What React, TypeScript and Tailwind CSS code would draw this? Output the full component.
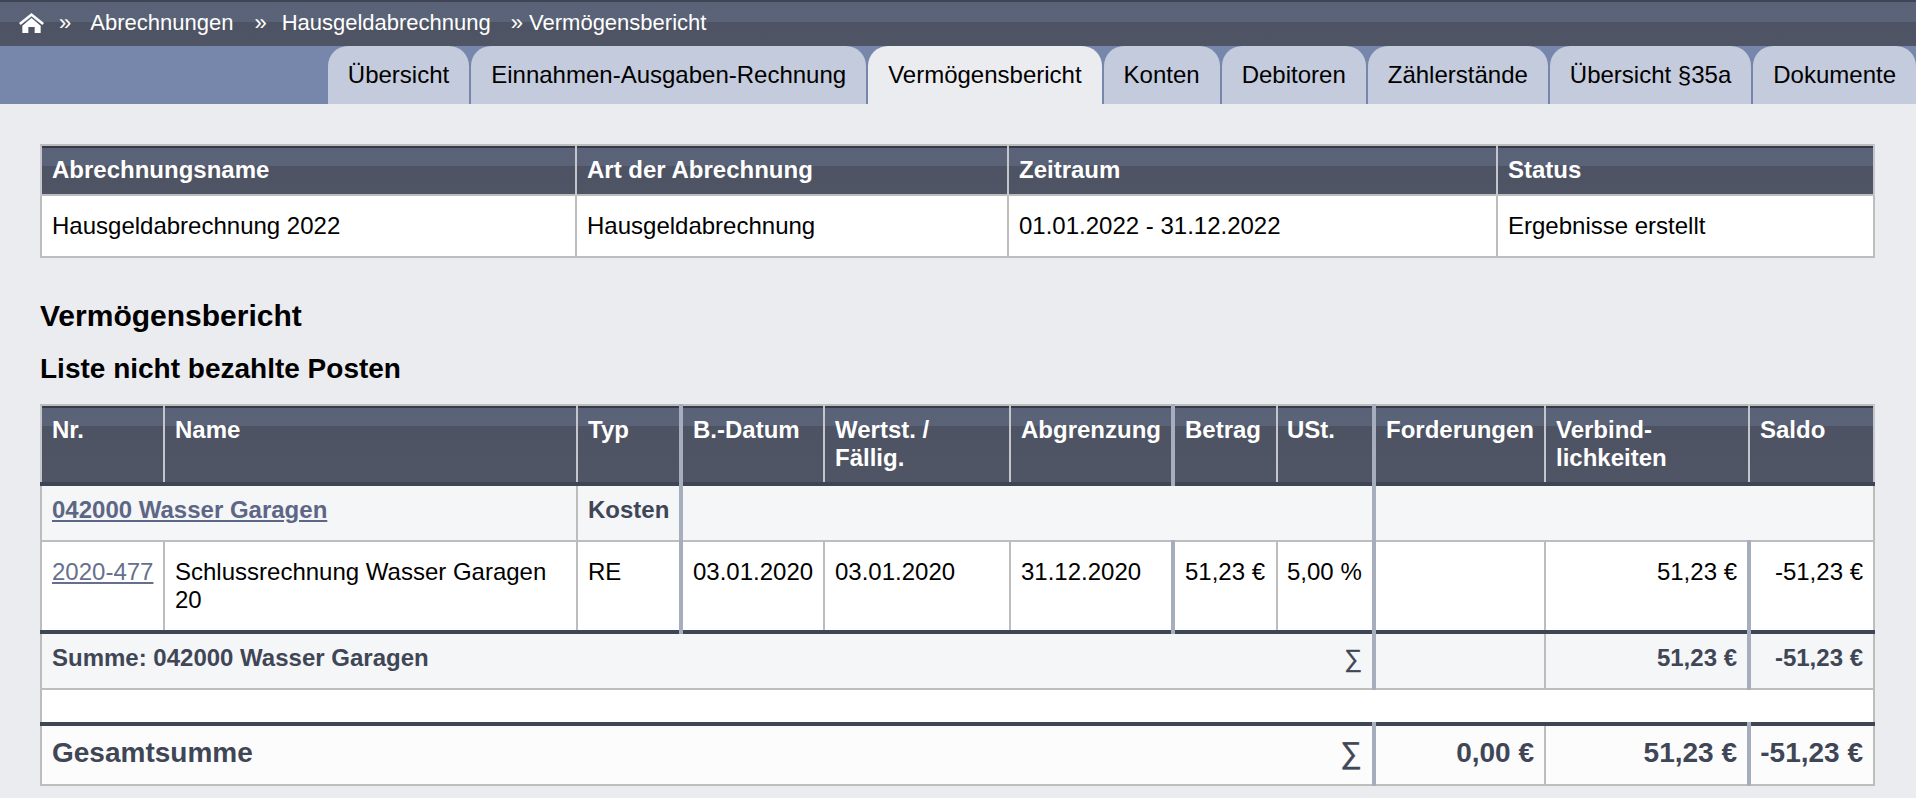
const crumbs = ["Abrechnungen", "Hausgeldabrechnung"];

const tabs = [
  "Übersicht",
  "Einnahmen-Ausgaben-Rechnung",
  "Vermögensbericht",
  "Konten",
  "Debitoren",
  "Zählerstände",
  "Übersicht §35a",
  "Dokumente",
];

const headBg =
  "bg-[linear-gradient(#353a47_0,#353a47_2px,#596276_2px,#5a6377_20px,#4d5362_20px,#4f5565_100%)]";
const th = `${headBg} border-x-2 border-t-2 border-[#c4c6cb] border-t-[#bdbdbd] px-2.5 py-2.5 text-left align-top font-bold text-white`;
const thick = "border-l-4 border-l-[#a6aebd]";
const rowBorder = "border-2 border-[#bdbdbd]";
const amount = "whitespace-nowrap px-2.5 text-right";

function HomeIcon() {
  return (
    <svg viewBox="0 0 75 60" className="h-5 w-[25px] fill-white">
      <path d="M37.5 0 75 30l-5 6-32.5-26L5 36l-5-6Z" />
      <path d="M10 38 37.5 15 65 38v22H47V42H28v18H10Z" />
    </svg>
  );
}

export default function App() {
  return (
    <div className="min-h-screen bg-[#ebecf0] font-['Liberation_Sans',Arial,sans-serif] text-[24px] leading-7 text-black">
      <header className="flex h-[46px] items-center bg-[linear-gradient(#3f4555_0,#3f4555_2px,#596276_2px,#5a6377_22px,#4d5362_22px,#4f5565_100%)] pl-[19px] text-[22px] text-white">
        <a href="#" className="mr-[15px]">
          <HomeIcon />
        </a>
        <span className="mr-[19px]">»</span>
        <a href="#">{crumbs[0]}</a>
        <span className="ml-[21px] mr-[15px]">»</span>
        <a href="#">{crumbs[1]}</a>
        <span className="ml-5 mr-1.5">»</span>
        <span>Vermögensbericht</span>
      </header>

      <nav className="flex h-[58px] justify-end gap-[2px] bg-[#7787ab]">
        {tabs.map((tab) => (
          <a
            key={tab}
            href="#"
            className={`flex items-center rounded-t-[20px] px-5 ${
              tab === "Vermögensbericht" ? "bg-[#ebecf0]" : "bg-[#c3cbdc]"
            }`}
          >
            {tab}
          </a>
        ))}
      </nav>

      <main className="pl-10 pr-[41px] pt-10">
        <table className="w-full table-fixed border-collapse">
          <colgroup>
            <col className="w-[535px]" />
            <col className="w-[432px]" />
            <col className="w-[489px]" />
            <col className="w-[377px]" />
          </colgroup>
          <thead>
            <tr>
              <th className={th}>Abrechnungsname</th>
              <th className={th}>Art der Abrechnung</th>
              <th className={th}>Zeitraum</th>
              <th className={th}>Status</th>
            </tr>
          </thead>
          <tbody className="bg-white">
            <tr>
              <td className={`${rowBorder} px-2.5 py-4`}>Hausgeldabrechnung 2022</td>
              <td className={`${rowBorder} px-2.5 py-4`}>Hausgeldabrechnung</td>
              <td className={`${rowBorder} px-2.5 py-4`}>01.01.2022 - 31.12.2022</td>
              <td className={`${rowBorder} px-2.5 py-4`}>Ergebnisse erstellt</td>
            </tr>
          </tbody>
        </table>

        <h2 className="mt-10 text-[30px] leading-9 font-bold">Vermögensbericht</h2>
        <h3 className="mt-[17px] text-[28px] leading-9 font-bold">Liste nicht bezahlte Posten</h3>

        <table className="mt-[17px] w-full table-fixed border-collapse">
          <colgroup>
            <col className="w-[123px]" />
            <col className="w-[413px]" />
            <col className="w-[104px]" />
            <col className="w-[143px]" />
            <col className="w-[186px]" />
            <col className="w-[163px]" />
            <col className="w-[104px]" />
            <col className="w-[97px]" />
            <col className="w-[171px]" />
            <col className="w-[204px]" />
            <col className="w-[125px]" />
          </colgroup>
          <thead>
            <tr className="border-b-4 border-[#3e4554]">
              <th className={th}>Nr.</th>
              <th className={th}>Name</th>
              <th className={th}>Typ</th>
              <th className={`${th} ${thick}`}>B.-Datum</th>
              <th className={th}>
                Wertst. /<br />
                Fällig.
              </th>
              <th className={th}>Abgrenzung</th>
              <th className={`${th} ${thick}`}>Betrag</th>
              <th className={`${th} pl-[9px]`}>USt.</th>
              <th className={`${th} ${thick}`}>Forderungen</th>
              <th className={th}>
                Verbind-
                <br />
                lichkeiten
              </th>
              <th className={th}>Saldo</th>
            </tr>
          </thead>
          <tbody>
            <tr className="bg-[#f5f6f8] font-bold text-[#3f4656]">
              <td colSpan={2} className={`${rowBorder} h-[57px] px-2.5 pb-1.5`}>
                <a href="#" className="text-[#5d6785] underline">
                  042000 Wasser Garagen
                </a>
              </td>
              <td className={`${rowBorder} px-2.5 pb-1.5`}>Kosten</td>
              <td colSpan={5} className={`${rowBorder} ${thick}`} />
              <td colSpan={3} className={`${rowBorder} ${thick}`} />
            </tr>

            <tr className="border-b-4 border-[#3e4554] bg-white align-top">
              <td className={`${rowBorder} whitespace-nowrap px-2.5 py-4`}>
                <a href="#" className="text-[#66708e] underline">
                  2020-477
                </a>
              </td>
              <td className={`${rowBorder} px-2.5 py-4`}>Schlussrechnung Wasser Garagen 20</td>
              <td className={`${rowBorder} px-2.5 py-4`}>RE</td>
              <td className={`${rowBorder} ${thick} px-2.5 py-4`}>03.01.2020</td>
              <td className={`${rowBorder} px-2.5 py-4`}>03.01.2020</td>
              <td className={`${rowBorder} px-2.5 py-4`}>31.12.2020</td>
              <td className={`${rowBorder} ${thick} whitespace-nowrap px-2.5 py-4`}>51,23 €</td>
              <td className={`${rowBorder} whitespace-nowrap pl-[9px] py-4`}>5,00 %</td>
              <td className={`${rowBorder} ${thick} px-2.5 py-4`} />
              <td className={`${rowBorder} ${amount} py-4`}>51,23 €</td>
              <td className={`${rowBorder} ${thick} ${amount} py-4`}>-51,23 €</td>
            </tr>

            <tr className="bg-[#f5f6f8] font-bold text-[#3f4656]">
              <td colSpan={8} className={`${rowBorder} h-[57px] px-2.5 pb-1.5`}>
                <div className="flex items-center justify-between">
                  <span>Summe: 042000 Wasser Garagen</span>
                  <span className="text-[25px] font-normal [-webkit-text-stroke:0.4px_#3f4656]">∑</span>
                </div>
              </td>
              <td className={`${rowBorder} ${thick}`} />
              <td className={`${rowBorder} ${amount} pb-1.5`}>51,23 €</td>
              <td className={`${rowBorder} ${thick} ${amount} pb-1.5`}>-51,23 €</td>
            </tr>

            <tr className="border-b-4 border-[#3e4554] bg-white">
              <td colSpan={11} className={`${rowBorder} h-[35px]`} />
            </tr>

            <tr className="bg-[#fcfcfc] text-[28px] font-bold text-[#3f4656]">
              <td colSpan={8} className={`${rowBorder} h-[61px] px-2.5 pb-1`}>
                <div className="flex items-center justify-between">
                  <span>Gesamtsumme</span>
                  <span className="text-[30px] font-normal [-webkit-text-stroke:0.5px_#3f4656]">∑</span>
                </div>
              </td>
              <td className={`${rowBorder} ${thick} ${amount} pb-1`}>0,00 €</td>
              <td className={`${rowBorder} ${amount} pb-1`}>51,23 €</td>
              <td className={`${rowBorder} ${thick} ${amount} pb-1 pl-0`}>-51,23 €</td>
            </tr>
          </tbody>
        </table>
      </main>
    </div>
  );
}
